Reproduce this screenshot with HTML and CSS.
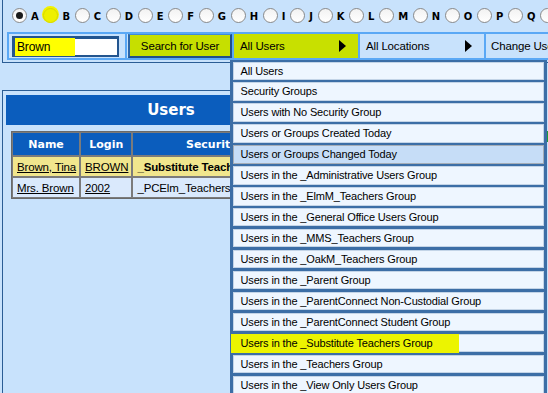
FILE: index.html
```html
<!DOCTYPE html>
<html lang="en">
<head>
  <meta charset="UTF-8">
  <title>Users</title>
  <link rel="stylesheet" href="styles.css">
</head>
<body>
  <div class="top">
    <div class="letters">
      <label class="radio"><span class="dot on"></span><b>A</b></label>
      <label class="radio"><span class="dot mark"></span><b>B</b></label>
      <label class="radio"><span class="dot"></span><b>C</b></label>
      <label class="radio"><span class="dot"></span><b>D</b></label>
      <label class="radio"><span class="dot"></span><b>E</b></label>
      <label class="radio"><span class="dot"></span><b>F</b></label>
      <label class="radio"><span class="dot"></span><b>G</b></label>
      <label class="radio"><span class="dot"></span><b>H</b></label>
      <label class="radio"><span class="dot"></span><b>I</b></label>
      <label class="radio"><span class="dot"></span><b>J</b></label>
      <label class="radio"><span class="dot"></span><b>K</b></label>
      <label class="radio"><span class="dot"></span><b>L</b></label>
      <label class="radio"><span class="dot"></span><b>M</b></label>
      <label class="radio"><span class="dot"></span><b>N</b></label>
      <label class="radio"><span class="dot"></span><b>O</b></label>
      <label class="radio"><span class="dot"></span><b>P</b></label>
      <label class="radio"><span class="dot"></span><b>Q</b></label>
      <label class="radio"><span class="dot"></span><b>R</b></label>
    </div>

    <div class="bar">
      <div class="cell search">
        <div class="field"><span class="hl-text">Brown</span></div>
      </div>
      <div class="cell">
        <button class="btn">Search for User</button>
      </div>
      <div class="cell menu picked">
        <span>All Users</span><span class="arrow"></span>
      </div>
      <div class="cell menu">
        <span>All Locations</span><span class="arrow"></span>
      </div>
      <div class="cell menu last">
        <span>Change User</span>
      </div>
    </div>
  </div>

  <div class="main">
    <div class="panel users">
      <div class="head">Users</div>
      <table class="grid">
        <thead>
          <tr>
            <th class="c-name">Name</th>
            <th class="c-login">Login</th>
            <th class="c-group">Security Group</th>
          </tr>
        </thead>
        <tbody>
          <tr class="sel">
            <td><a href="#">Brown, Tina</a></td>
            <td><a href="#">BROWN</a></td>
            <td class="strong">_Substitute Teachers</td>
          </tr>
          <tr>
            <td><a href="#">Mrs. Brown</a></td>
            <td><a href="#">2002</a></td>
            <td>_PCElm_Teachers</td>
          </tr>
        </tbody>
      </table>
    </div>

    <div class="panel side">
      <div class="head">Add User</div>
      <div class="go"></div>
    </div>
  </div>

  <ul class="dropdown">
    <li>All Users</li>
    <li>Security Groups</li>
    <li>Users with No Security Group</li>
    <li>Users or Groups Created Today</li>
    <li class="hover">Users or Groups Changed Today</li>
    <li>Users in the _Administrative Users Group</li>
    <li>Users in the _ElmM_Teachers Group</li>
    <li>Users in the _General Office Users Group</li>
    <li>Users in the _MMS_Teachers Group</li>
    <li>Users in the _OakM_Teachers Group</li>
    <li>Users in the _Parent Group</li>
    <li>Users in the _ParentConnect Non-Custodial Group</li>
    <li>Users in the _ParentConnect Student Group</li>
    <li><span class="hl-item">Users in the _Substitute Teachers Group</span></li>
    <li>Users in the _Teachers Group</li>
    <li>Users in the _View Only Users Group</li>
  </ul>
</body>
</html>
```

FILE: styles.css
```css
* {
  box-sizing: border-box;
  margin: 0;
  padding: 0;
}

html, body {
  width: 548px;
  height: 393px;
  overflow: hidden;
}

body {
  position: relative;
  background: #c8e2fc;
  font-family: 'Liberation Sans', Arial, sans-serif;
  font-size: 11px;
  letter-spacing: -0.15px;
  color: #000;
}

/* top search panel */
.top {
  margin-left: 2px;
  height: 63px;
  border-left: 1px solid #2b5d95;
  border-bottom: 1px solid #2b5d95;
  padding-top: 7px;
  white-space: nowrap;
  overflow: hidden;
}

.letters {
  display: flex;
  padding-left: 9px;
  height: 16px;
}

.radio {
  display: flex;
  align-items: flex-end;
  flex: none;
}

.dot {
  width: 15px;
  height: 15px;
  border-radius: 50%;
  border: 1px solid #8a8a8a;
  background: linear-gradient(#f2f2f2, #ffffff);
  margin-right: 4px;
  position: relative;
}

.dot.on::after {
  content: '';
  position: absolute;
  left: 3px;
  top: 3px;
  width: 7px;
  height: 7px;
  border-radius: 50%;
  background: #1a1a1a;
}

.dot.mark {
  background: #eef000;
  border-color: #d8d800;
  box-shadow: 0 -1px 0 1px #f2f200;
}

.radio b {
  font-family: 'DejaVu Sans', Verdana, sans-serif;
  font-size: 10px;
  letter-spacing: 0;
  line-height: 10px;
  margin-right: 4.7px;
  margin-bottom: 1px;
}

.bar {
  display: flex;
  margin: 9px 0 0 4px;
  height: 28px;
  border-top: 2px solid #5aa8f5;
  border-bottom: 2px solid #5aa8f5;
}

.cell {
  display: flex;
  align-items: center;
  flex: none;
  border-right: 2px solid #5aa8f5;
}

.search {
  width: 120px;
  border-left: 2px solid #5aa8f5;
  padding-left: 3px;
}

.field {
  width: 107px;
  height: 21px;
  background: #fff;
  border-style: solid;
  border-width: 3px 2px 2px 3px;
  border-color: #23558f;
  padding-left: 0;
  display: flex;
  align-items: center;
  font-size: 12px;
}

.hl-text {
  background: #ffff00;
  padding: 2px 25px 2px 2px;
}

.btn {
  width: 104px;
  height: 24px;
  margin-left: 1px;
  font-family: inherit;
  font-size: 11.5px;
  letter-spacing: -0.15px;
  color: #000;
  background: #c6df00;
  border-style: solid;
  border-width: 1px 2px 2px 2px;
  border-color: #3f8ad9 #1f4f8a #1f4f8a #2d66a8;
  cursor: pointer;
}

.menu {
  width: 126px;
  padding: 0 12px 0 6px;
  justify-content: space-between;
  font-size: 11.5px;
}

.menu.picked {
  background: #c8e000;
}

.menu.last {
  width: 80px;
  border-right: none;
  padding-left: 5px;
}

.arrow {
  width: 0;
  height: 0;
  border-left: 7px solid #000;
  border-top: 6px solid transparent;
  border-bottom: 6px solid transparent;
}

/* lower panels */
.main {
  display: flex;
  gap: 5px;
  margin-top: 27px;
  margin-left: 2px;
}

.panel {
  height: 320px;
  border-top: 1px solid #2b5d95;
  border-left: 1px solid #2b5d95;
  padding: 4px 3px;
  flex: none;
}

.users {
  width: 337px;
}

.side {
  width: 200px;
}

.head {
  height: 30px;
  background: #0b5dbd;
  color: #fff;
  font-family: 'DejaVu Sans', Verdana, sans-serif;
  font-weight: bold;
  font-size: 15px;
  letter-spacing: 0;
  text-align: center;
  line-height: 30px;
}

.grid {
  margin: 6px 0 0 5px;
  border-collapse: separate;
  border-spacing: 0;
  border: 1px solid #6a6a6a;
}

.grid th,
.grid td {
  border: 1px solid #7b7b7b;
  white-space: nowrap;
}

.grid th {
  height: 24px;
  background: #0b5dbd;
  color: #fff;
  font-family: 'DejaVu Sans', Verdana, sans-serif;
  font-size: 11px;
  letter-spacing: 0;
  font-weight: bold;
}

.grid td {
  height: 21px;
  padding: 0 3px 0 4px;
  background: #dae9fc;
  font-size: 11.5px;
}

.grid tr.sel td {
  background: #f1e68d;
}

.grid a {
  color: #000;
}

.grid .strong {
  font-weight: bold;
}

.c-name { width: 68px; }
.c-login { width: 47px; }
.c-group { width: 200px; }

.go {
  width: 60px;
  height: 11px;
  margin: 6px 0 0 140px;
  background: #1e9a3a;
}

/* filter dropdown */
.dropdown {
  position: absolute;
  left: 230px;
  top: 60px;
  width: 317px;
  list-style: none;
  background: #3c6ea6;
  padding: 1.5px 3px 0 2.5px;
}

.dropdown li {
  height: 18.4px;
  margin-bottom: 2.55px;
  padding-left: 7px;
  line-height: 17.5px;
  background: #eef6ff;
  border: 1px solid #c3d4e7;
  white-space: nowrap;
}

.dropdown li.hover {
  background: #c6ddf7;
  border-color: #a5adb6;
}

.hl-item {
  background: #ecf400;
  margin-left: -10px;
  padding: 3px 26px 4px 10px;
}
```
